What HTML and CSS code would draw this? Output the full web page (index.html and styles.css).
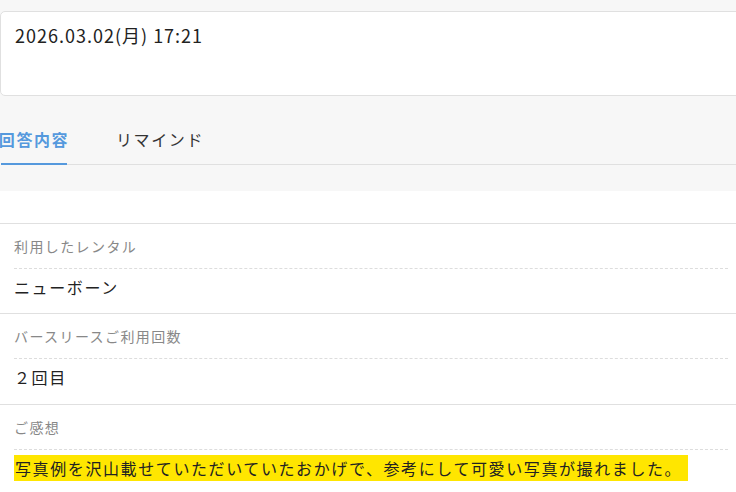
FILE: index.html
```html
<!doctype html>
<html lang="ja">
  <head>
    <meta charset="UTF-8" />
    <meta name="viewport" content="width=device-width, initial-scale=1.0" />
    <title>回答内容</title>
    <link rel="stylesheet" href="styles.css">
  </head>
  <body>
    <div class="date-card">2026.03.02(月) 17:21</div>

    <div class="tabs">
      <div class="tab active"><span>回答内容</span></div>
      <div class="tab"><span>リマインド</span></div>
    </div>

    <div class="answers">
      <div class="answer">
        <div class="answer-label">利用したレンタル</div>
        <div class="answer-value">ニューボーン</div>
      </div>
      <div class="answer">
        <div class="answer-label">バースリースご利用回数</div>
        <div class="answer-value">２回目</div>
      </div>
      <div class="answer">
        <div class="answer-label">ご感想</div>
        <div class="answer-value">
          <span class="marker">写真例を沢山載せていただいていたおかげで、参考にして可愛い写真が撮れました。</span>
        </div>
      </div>
    </div>
  </body>
</html>
```

FILE: styles.css
```css
body {
  margin: 0;
  font-family: "Noto Sans CJK JP", "Noto Sans", sans-serif;
  color: #333;
  background-color: #f7f7f7;
  overflow: hidden;
}
.date-card {
  margin: 11px -10px 0 0;
  height: 85px;
  padding: 10px 14px 0;
  box-sizing: border-box;
  background-color: #fff;
  border: 1px solid #e0e0e0;
  border-radius: 5px;
  font-size: 18px;
  letter-spacing: 1px;
  line-height: 26px;
  color: #222;
}
.tabs {
  display: flex;
  height: 68px;
  margin-left: 1px;
  border-bottom: 1px solid #e0e0e0;
}
.tab {
  display: flex;
  align-items: center;
  justify-content: center;
  white-space: nowrap;
  font-size: 16px;
  letter-spacing: 0.1em;
  padding-top: 18px;
}
.tab:first-child {
  width: 66px;
}
.tab + .tab {
  margin-left: 49px;
}
.tab.active {
  color: #5599dd;
  font-weight: bold;
  border-bottom: 2px solid #5599dd;
  margin-bottom: -1px;
}
.answers {
  margin-top: 26px;
  padding-top: 32px;
  background-color: #fff;
  min-height: 300px;
}
.answer {
  border-top: 1px solid #e0e0e0;
}
.answer + .answer + .answer {
  margin-top: 1px;
}
.answer-label {
  margin: 0 8px 0 14px;
  padding: 12px 0 11px;
  line-height: 21px;
  font-size: 14px;
  letter-spacing: 0.1em;
  color: #888;
  border-bottom: 1px dashed #ddd;
}
.answer-value {
  padding: 6px 8px 14px 14px;
  line-height: 24px;
  font-size: 16px;
  letter-spacing: 0.1em;
  color: #222;
}
.marker {
  background-color: #ffe600;
  padding: 1px 6px 1px 1px;
}
```
